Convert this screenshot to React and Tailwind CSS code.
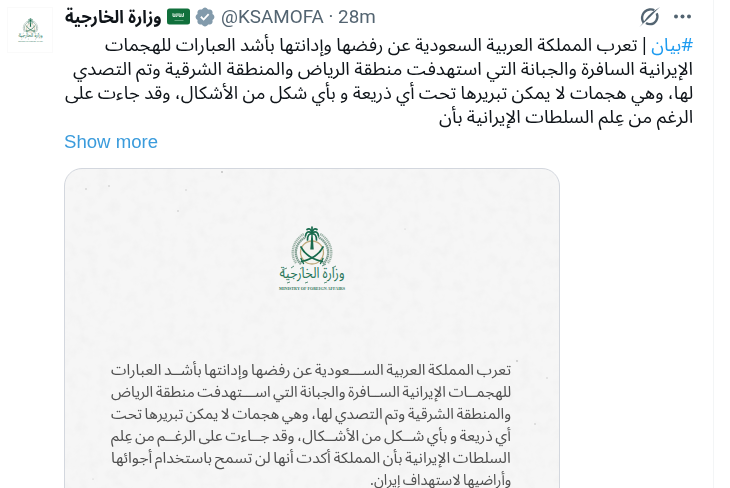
import { useLayoutEffect, useRef, useState } from "react";

// Condenses or widens a single line of text so that it fills its measure.
function Fit({ width, rtl, className = "", children }) {
  const ref = useRef(null);
  const [scale, setScale] = useState(1);
  useLayoutEffect(() => {
    const fit = () => setScale(width / ref.current.offsetWidth);
    fit();
    document.fonts.ready.then(fit);
  }, [width]);
  return (
    <div dir={rtl ? "rtl" : "ltr"} className={`flex shrink-0 whitespace-nowrap ${className}`} style={{ width }}>
      <span
        ref={ref}
        className={`block shrink-0 ${rtl ? "origin-right" : "origin-left"}`}
        style={{ transform: `scaleX(${scale})` }}
      >
        {children}
      </span>
    </div>
  );
}

const postLines = [
  { width: 620, text: "الإيرانية السافرة والجبانة التي استهدفت منطقة الرياض والمنطقة الشرقية وتم التصدي" },
  { width: 628, text: "لها، وهي هجمات لا يمكن تبريرها تحت أي ذريعة و بأي شكل من الأشكال، وقد جاءت على" },
  { width: 254, text: "الرغم من عِلم السلطات الإيرانية بأن" },
];

const statementLines = [
  { width: 400, text: "تعرب المملكة العربية الســـعودية عن رفضها وإدانتها بأشــد العبارات" },
  { width: 400, text: "للهجمــات الإيرانية الســافرة والجبانة التي اســـتهدفت منطقة الرياض" },
  { width: 400, text: "والمنطقة الشرقية وتم التصدي لها، وهي هجمات لا يمكن تبريرها تحت" },
  { width: 400, text: "أي ذريعة و بأي شــكل من الأشــكال، وقد جــاءت على الرغــم من عِلم" },
  { width: 400, text: "السلطات الإيرانية بأن المملكة أكدت أنها لن تسمح باستخدام أجوائها" },
  { width: 141, text: "وأراضيها لاستهداف إيران." },
];

const specks = [
  [157, 3, 1], [21, 20, 0.8], [44, 17, 0.8], [121, 21, 0.7], [113, 42, 0.8],
  [452, 192, 0.9], [482, 209, 0.7], [470, 255, 0.8], [28, 310, 0.6], [340, 60, 0.6],
];

function Emblem({ className }) {
  return (
    <svg viewBox="0 0 72 70" className={className} role="img">
      <g fill="none" stroke="#7f9d90" strokeWidth="2.400" strokeDasharray="1.600 .5">
        <path d="M25 41C17 34 18 20 30 14" />
        <path d="M47 41C55 34 54 20 42 14" />
      </g>
      <g fill="none" stroke="#9db3a8" strokeWidth="2.400" strokeDasharray="1.200 .6">
        <path d="M20 40C14 32 16 18 28 11" />
        <path d="M52 40C58 32 56 18 44 11" />
      </g>
      <circle cx="36" cy="29.500" r="11.500" fill="#f4f3ef" stroke="#bfa97c" strokeWidth="1.300" />
      <g fill="none" stroke="#176a4c" strokeLinecap="round">
        <path d="M25 24C28 30 35 36 46.500 38.500" strokeWidth="1.700" />
        <path d="M47 24C44 30 37 36 25.500 38.500" strokeWidth="1.700" />
        <path d="M25 35.500l2.500 5M47 35.500l-2.500 5" strokeWidth="1.400" />
      </g>
      <path d="M35.300 12h1.400l1 14.500h-3.400z" fill="#176a4c" />
      <g fill="none" stroke="#176a4c" strokeWidth="1.700" strokeLinecap="round">
        <path d="M36 11C33 10 31.500 13 31.500 17" />
        <path d="M36 11C39 10 40.500 13 40.500 17" />
        <path d="M36 10C32 7.500 29.800 9.500 29.500 13" />
        <path d="M36 10C40 7.500 42.200 9.500 42.500 13" />
        <path d="M36 9C34.500 6 33 5 31 6.500" />
        <path d="M36 9C37.500 6 39 5 41 6.500" />
        <path d="M36 10V4" />
      </g>
      <text x="36" y="54.500" textAnchor="middle" textLength="65" lengthAdjust="spacingAndGlyphs" direction="rtl" fill="#28765a" className="font-['Noto_Sans_Arabic','DejaVu_Sans',sans-serif] text-[15px]">
        وزارة الخارجية
      </text>
      <path d="M6 47l5-2M15 45l3-2M24 46l3-2M46 43l4-2M56 45l4-2M11 60l3-1M29 60l3-1M48 60l3-1" stroke="#5b917c" strokeWidth="1" />
      <text x="36" y="67" textAnchor="middle" textLength="66" lengthAdjust="spacingAndGlyphs" fill="#34795f" className="font-['Liberation_Serif',serif] text-[5px] font-bold">
        MINISTRY OF FOREIGN AFFAIRS
      </text>
    </svg>
  );
}

function Flag() {
  return (
    <svg viewBox="0 0 23 17" className="h-[17px] w-[23px] shrink-0">
      <rect y=".5" width="23" height="16" rx="2.500" fill="#11703c" />
      <g stroke="#c5e0cf" strokeWidth="1" fill="none">
        <path d="M6 5v3.500h2v-3M10 5v3.500H8.500M12 5v3.500h2v-3M16.500 5v3.500h-2" />
        <path d="M5.500 7h11" strokeWidth=".7" />
      </g>
      <path d="M7.500 12.500h9" stroke="#6fae89" strokeWidth=".8" />
    </svg>
  );
}

function Verified() {
  return (
    <svg viewBox="0 0 22 22" className="h-[22px] w-[22px] shrink-0" fill="#829aab">
      <path d="M20.396 11c-.018-.646-.215-1.275-.57-1.816-.354-.54-.852-.972-1.438-1.246.223-.607.27-1.264.14-1.897-.131-.634-.437-1.218-.882-1.687-.47-.445-1.053-.75-1.687-.882-.633-.13-1.290-.083-1.897.14-.273-.587-.704-1.086-1.245-1.440S11.647 1.620 11 1.604c-.646.017-1.273.213-1.813.568s-.969.854-1.240 1.440c-.608-.223-1.267-.272-1.902-.14-.635.130-1.220.436-1.690.882-.445.470-.749 1.055-.878 1.688-.130.633-.080 1.290.144 1.896-.587.274-1.087.705-1.443 1.245-.356.540-.555 1.170-.574 1.817.020.647.218 1.276.574 1.817.356.540.856.972 1.443 1.245-.224.606-.274 1.263-.144 1.896.130.634.433 1.218.877 1.688.470.443 1.054.747 1.687.878.633.132 1.290.084 1.897-.136.274.586.705 1.084 1.246 1.439.540.354 1.170.551 1.816.569.647-.016 1.276-.213 1.817-.567s.972-.854 1.245-1.440c.604.239 1.266.296 1.903.164.636-.132 1.220-.447 1.680-.907.460-.460.776-1.044.908-1.681s.075-1.299-.165-1.903c.586-.274 1.084-.705 1.439-1.246.354-.540.551-1.170.569-1.816zM9.662 14.850l-3.429-3.428 1.293-1.302 2.072 2.072 4.400-4.794 1.347 1.246z" />
    </svg>
  );
}

export default function App() {
  return (
    <div className="h-[488px] w-[730px] overflow-hidden bg-white font-['Liberation_Sans',Arial,sans-serif] text-[#0f1419]">
      <article className="flex h-full w-[714px] border-r border-[#f3f5f6]">
        <div className="w-16 shrink-0 pt-[7px] pl-[7px]">
          <div className="flex h-[46px] w-[46px] items-center justify-center border border-[#fafafa]">
            <Emblem className="h-[26px] w-[27px]" />
          </div>
        </div>

        <div className="min-w-0 flex-1">
          <header className="flex h-[33px] items-center pl-px">
            <Fit width={97} rtl className="text-[18px] leading-6 font-bold font-['Noto_Sans_Arabic','DejaVu_Sans',sans-serif]">
              وزارة الخارجية
            </Fit>
            <span className="ml-[5px] flex"><Flag /></span>
            <span className="ml-1 flex"><Verified /></span>
            <Fit width={155} className="ml-[5px] text-[18px] leading-6 text-[#536471] font-['Roboto',sans-serif]">
              @KSAMOFA · 28m
            </Fit>
            <svg viewBox="0 0 22 24" className="ml-[263px] h-6 w-[22px] shrink-0" fill="none" stroke="#536471" strokeWidth="2.300">
              <path d="M4.500 17.500C1.500 13 3.500 5.500 10.500 4.500c2-.3 3.500 0 4.700.8M17.700 8.200c2.300 5-1.200 11-6.700 11-2 0-3.200-.6-4-1.200" />
              <path d="M.5 22C5 17.500 7 12 13.500 7L21 2C16 6 13 11 8 15z" fill="#536471" stroke="none" />
            </svg>
            <svg viewBox="0 0 20 6" className="ml-3 h-1.5 w-5 shrink-0" fill="#536471">
              <circle cx="3" cy="2.500" r="2" />
              <circle cx="9.500" cy="2.500" r="2" />
              <circle cx="16" cy="2.500" r="2" />
            </svg>
          </header>

          <div dir="rtl" className="mr-5 text-[18px] leading-6 [word-spacing:-0.5px] font-['Noto_Sans_Arabic','DejaVu_Sans',sans-serif]">
            <Fit width={588} rtl className="h-6">
              <span className="text-[#1d9bf0]">#بيان</span>
              <span className="[word-spacing:-3px]"> | </span>
              تعرب المملكة العربية السعودية عن رفضها وإدانتها بأشد العبارات للهجمات
            </Fit>
            {postLines.map((line) => (
              <Fit key={line.text} width={line.width} rtl className="h-6">
                {line.text}
              </Fit>
            ))}
          </div>

          <Fit width={94} className="pt-px text-[18px] leading-6 text-[#3a9bdc]">Show more</Fit>

          <section className="relative mt-[14px] h-[400px] w-[496px] overflow-hidden rounded-[18px] border border-[#d3d7de] bg-[#f6f6f6]">
            <svg viewBox="0 0 494 398" className="absolute inset-0 h-full w-full">
              <filter id="paper">
                <feTurbulence type="fractalNoise" baseFrequency=".09" numOctaves="4" seed="4" />
                <feColorMatrix values="0 0 0 0 .5  0 0 0 0 .5  0 0 0 0 .5  .16 0 0 0 -.07" />
              </filter>
              <rect width="494" height="398" filter="url(#paper)" />
              {specks.map(([x, y, r]) => (
                <circle key={`${x}-${y}`} cx={x} cy={y} r={r} fill="#c2c2c2" />
              ))}
            </svg>
            <div className="relative flex flex-col items-center pt-[54px]">
              <Emblem className="h-[70px] w-[72px]" />
            </div>
            <div dir="rtl" className="relative mt-[66px] pr-[48px] text-[15px] leading-[22px] text-[#505050] [word-spacing:-1.5px] font-['Noto_Sans_Arabic','DejaVu_Sans',sans-serif]">
              {statementLines.map((line) => (
                <Fit key={line.text} width={line.width} rtl className="h-[22px]">
                  {line.text}
                </Fit>
              ))}
            </div>
          </section>
        </div>
      </article>
    </div>
  );
}
